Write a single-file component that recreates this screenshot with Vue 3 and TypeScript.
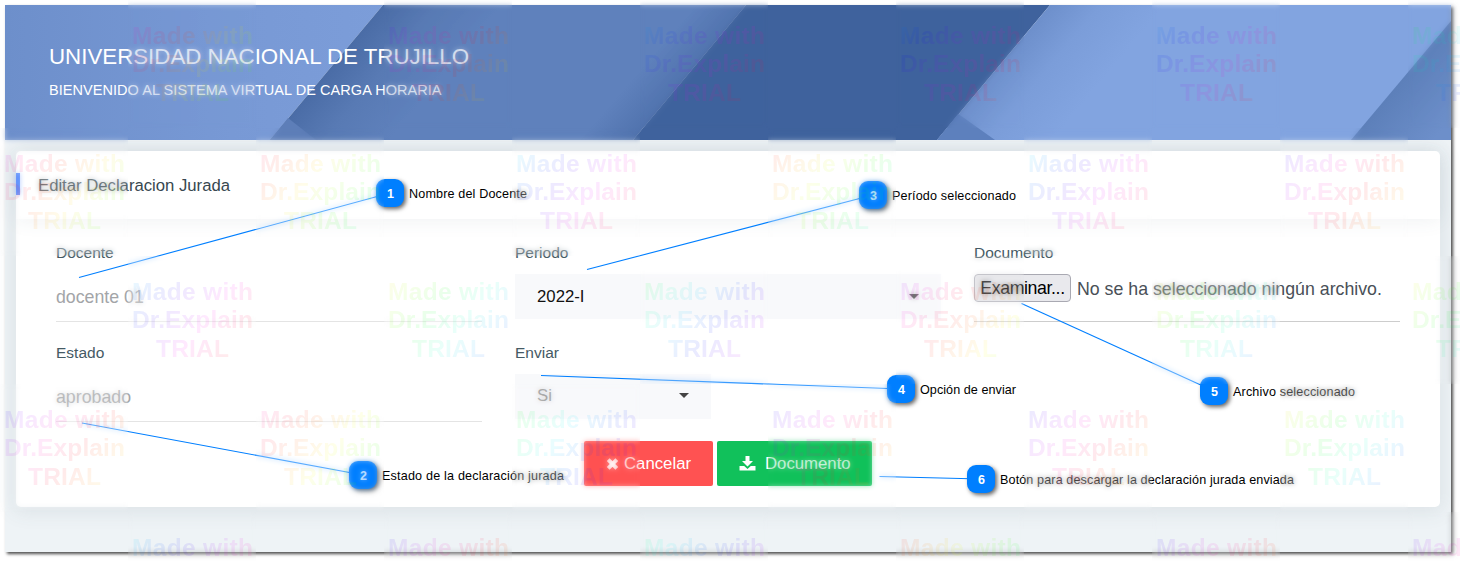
<script setup lang="ts">
interface Tile { x: number; y: number; hue: number }
interface Callout { n: number; x: number; y: number; tx: number; ty: number; text: string; w: number }

const tileRows: { y: number; x0: number; hues: number[] }[] = [
  { y: 0, x0: 128, hues: [300, 250, 190, 200, 195, 120] },
  { y: 128, x0: 0, hues: [295, 335, 180, 355, 180, 240] },
  { y: 256, x0: 128, hues: [190, 50, 120, 270, 45, 55] },
  { y: 384, x0: 0, hues: [240, 310, 110, 235, 235, 50] },
  { y: 512, x0: 128, hues: [180, 240, 140, 350, 235, 250] },
]
const tiles: Tile[] = tileRows.flatMap((r) => r.hues.map((hue, i) => ({ x: r.x0 + i * 256, y: r.y, hue })))
const stops = [0, 0.2, 0.4, 0.6, 0.8, 1]
const stopColor = (hue: number, at: number) => `hsl(${(hue + at * 190) % 360}, 100%, 50%)`

const callouts: Callout[] = [
  { n: 1, x: 390, y: 193, tx: 79, ty: 277.5, text: 'Nombre del Docente', w: 118 },
  { n: 2, x: 363, y: 475, tx: 82, ty: 423, text: 'Estado de la declaración jurada', w: 182 },
  { n: 3, x: 873, y: 195, tx: 587, ty: 269.5, text: 'Período seleccionado', w: 124 },
  { n: 4, x: 901, y: 389, tx: 541, ty: 375.5, text: 'Opción de enviar', w: 96 },
  { n: 5, x: 1214, y: 391, tx: 1021.5, ty: 303.5, text: 'Archivo seleccionado', w: 122 },
  { n: 6, x: 981, y: 479, tx: 879.5, ty: 476.5, text: 'Botón para descargar la declaración jurada enviada', w: 294 },
]
</script>

<template>
  <div class="stage">
    <main class="page">
      <header class="banner">
        <svg class="banner-art" viewBox="0 0 1446 135" preserveAspectRatio="none" aria-hidden="true">
          <defs>
            <linearGradient id="b1" x1="0" x2="1"><stop offset="0" stop-color="#6d8fcb" /><stop offset=".6" stop-color="#7899d5" /><stop offset="1" stop-color="#7c9dd9" /></linearGradient>
            <linearGradient id="b2" gradientUnits="userSpaceOnUse" x1="322" y1="67" x2="640" y2="334"><stop offset="0" stop-color="#4a6ca6" /><stop offset=".1" stop-color="#587ab4" /><stop offset=".22" stop-color="#5f81bc" /><stop offset="1" stop-color="#5f81bc" /></linearGradient>
            <linearGradient id="b2e" gradientUnits="userSpaceOnUse" x1="654" y1="43" x2="684" y2="69"><stop offset="0" stop-color="#3f629d" stop-opacity="0" /><stop offset="1" stop-color="#3f629d" stop-opacity=".45" /></linearGradient>
            <linearGradient id="b4" gradientUnits="userSpaceOnUse" x1="988" y1="67" x2="1140" y2="194"><stop offset="0" stop-color="#6d8fcb" /><stop offset=".2" stop-color="#7b9dd9" /><stop offset=".45" stop-color="#82a4e0" /><stop offset="1" stop-color="#82a4e0" /></linearGradient>
            <linearGradient id="b5" gradientUnits="userSpaceOnUse" x1="1390" y1="80" x2="1440" y2="122"><stop offset="0" stop-color="#5c7fb9" /><stop offset="1" stop-color="#6d8fca" /></linearGradient>
          </defs>
          <path d="M0 0H378L265 135H0Z" fill="url(#b1)" />
          <path d="M378 0H741L628 135H265Z" fill="url(#b2)" />
          <path d="M283 113L311 135H265Z" fill="#5d7eb8" />
          <path d="M641 0H741L628 135H528Z" fill="url(#b2e)" />
          <path d="M741 0H1045L932 135H628Z" fill="#3f629d" />
          <path d="M1045 0H1446V135H932Z" fill="url(#b4)" />
          <path d="M959 113L990 135H932L953 109Z" fill="#5d80bd" />
          <path d="M1446 16V135H1346Z" fill="url(#b5)" />
        </svg>
        <div class="banner-text">
          <h1>UNIVERSIDAD NACIONAL DE TRUJILLO</h1>
          <p>BIENVENIDO AL SISTEMA VIRTUAL DE CARGA HORARIA</p>
        </div>
      </header>

      <section class="card">
        <div class="card-head"><span class="accent"></span><h2>Editar Declaracion Jurada</h2></div>
        <form class="form" @submit.prevent>
          <div class="field">
            <label>Docente</label>
            <div class="line muted">docente 01</div>
          </div>
          <div class="field">
            <label>Periodo</label>
            <div class="select"><span>2022-I</span><i class="caret"></i></div>
          </div>
          <div class="field">
            <label>Documento</label>
            <div class="line file"><button type="button" class="browse">Examinar...</button><span>No se ha seleccionado ningún archivo.</span></div>
          </div>
          <div class="field">
            <label>Estado</label>
            <div class="line muted">aprobado</div>
          </div>
          <div class="field">
            <label>Enviar</label>
            <div class="select short"><span>Si</span><i class="caret"></i></div>
          </div>
        </form>
        <div class="actions">
          <button type="button" class="btn cancel">
            <svg width="13" height="14" viewBox="0 0 13 14"><path d="M2.2 2.700L10.800 11.300M10.800 2.700L2.200 11.300" stroke="#fff" stroke-width="4" /></svg>
            <span>Cancelar</span>
          </button>
          <button type="button" class="btn download">
            <svg width="17" height="16" viewBox="0 0 17 16"><path fill="#fff" d="M6.500 0h4v5h3.500L8.500 10.500 3 5h3.500zM.5 10h4.700l3.300 3 3.300-3h4.700V14.500H.5z" /></svg>
            <span>Documento</span>
          </button>
        </div>
      </section>
    </main>

    <svg class="callouts" width="1460" height="561" viewBox="0 0 1460 561">
      <g v-for="c in callouts" :key="c.n">
        <line :x1="c.tx" :y1="c.ty" :x2="c.x" :y2="c.y" />
        <rect class="pin" :x="c.x - 14" :y="c.y - 14" width="28" height="28" rx="9" />
        <text class="num" :x="c.x + 0.500" :y="c.y + 5" text-anchor="middle">{{ c.n }}</text>
        <text class="note" :x="c.x + 19" :y="c.y + 4.500" :textLength="c.w">{{ c.text }}</text>
      </g>
    </svg>

    <div class="tiles">
      <div v-for="t in tiles" :key="`${t.x}-${t.y}`" class="tile" :style="{ left: `${t.x}px`, top: `${t.y}px` }"></div>
    </div>
    <svg class="marks" width="1460" height="561" viewBox="0 0 1460 561">
      <g v-for="(t, i) in tiles" :key="i" :transform="`translate(${t.x} ${t.y})`" :fill="`url(#hue${i})`">
        <linearGradient :id="`hue${i}`" gradientUnits="userSpaceOnUse" x1="0" y1="20" x2="115" y2="112">
          <stop v-for="s in stops" :key="s" :offset="s" :stop-color="stopColor(t.hue, s)" />
        </linearGradient>
        <text x="4" y="44" textLength="121">Made with</text>
        <text x="4" y="72" textLength="121">Dr.Explain</text>
        <text x="28" y="101" textLength="73">TRIAL</text>
      </g>
    </svg>
  </div>
</template>

<style>
html, body { margin: 0; background: #fff; }
</style>

<style scoped>
* { box-sizing: border-box; }
.stage { position: relative; width: 1460px; height: 561px; padding: 5px; overflow: hidden; background: #fff; font-family: "Liberation Sans", Arial, sans-serif; }
.page { width: 1446px; height: 547px; background: #eef3f6; box-shadow: 2px 2px 3px rgba(0, 0, 0, .7); }
.banner { position: relative; height: 135px; }
.banner-art { position: absolute; inset: 0; width: 100%; height: 100%; }
.banner-text { position: relative; padding: 39px 0 0 44px; color: #fff; white-space: nowrap; }
h1 { margin: 0; font-size: 22.3px; line-height: 26px; font-weight: 400; }
p { margin: 11px 0 0; font-size: 14.500px; letter-spacing: .05px; line-height: 18px; }
.card { width: 1424px; height: 356px; margin: 11px 0 0 11px; background: #fff; border-radius: 5px; box-shadow: 0 2px 20px 3px rgba(69, 90, 100, .1); }
.card-head { height: 68px; display: flex; align-items: center; box-shadow: 0 2px 18px rgba(69, 90, 100, .08); }
.accent { width: 4px; height: 22px; background: #4680ff; margin-bottom: 2px; }
h2 { margin: 1px 0 0 18px; font-size: 16.700px; font-weight: 400; line-height: 20px; color: #37474f; }
.form { display: grid; grid-template-columns: 426px 426px 426px; column-gap: 33px; grid-auto-rows: 99.500px; padding: 24px 0 0 40px; }
label { display: block; font-size: 15.500px; line-height: 20px; color: #455a64; }
.line { height: 48px; margin-top: 11px; border-bottom: 1px solid #dcdcdc; font-size: 17.75px; line-height: 47px; color: #495057; }
.line.muted { color: #a3a5a8; border-bottom-color: #e4e4e4; }
.select { display: flex; align-items: center; justify-content: space-between; height: 45px; margin-top: 11px; padding: 0 22px; background: #f8f9fb; font-size: 16.75px; color: #111; }
.select.short { width: 196px; color: #888; }
.caret { border: 5px solid transparent; border-top-color: #444; border-bottom: 0; margin-top: -1px; }
.file { display: flex; gap: 6px; border-color: #cdcdcd; }
.browse { height: 28px; width: 97px; padding: 0; border: 1px solid #a9a9b2; border-radius: 4px; background: #e9e9ed; color: #000; font: 17.75px/24px "Liberation Sans", Arial, sans-serif; letter-spacing: -.4px; }
.file span { line-height: 31px; white-space: nowrap; }
.actions { display: flex; gap: 4px; padding-left: 568px; margin-top: -1px; }
.btn { display: flex; align-items: center; height: 45px; border: 0; border-radius: 2px; color: #fff; font: 16.75px "Liberation Sans", Arial, sans-serif; padding: 0 0 0 22px; }
.cancel { width: 129px; background: #ff5252; gap: 5px; }
.download { width: 155px; background: #11c15b; gap: 9px; }
.callouts, .marks { position: absolute; left: 0; top: 0; }
.callouts line { stroke: #007fff; stroke-width: 1.1; }
.pin { fill: #007fff; filter: drop-shadow(2px 2px 2px rgba(0, 0, 0, .6)); }
.num { fill: #fff; font-size: 12.500px; font-weight: 700; }
.note { fill: #000; font-size: 12.600px; }
.tile { position: absolute; width: 128px; height: 128px; opacity: .42; backdrop-filter: blur(2.500px); }
.marks { opacity: .085; font-size: 24.500px; font-weight: 700; }
</style>
